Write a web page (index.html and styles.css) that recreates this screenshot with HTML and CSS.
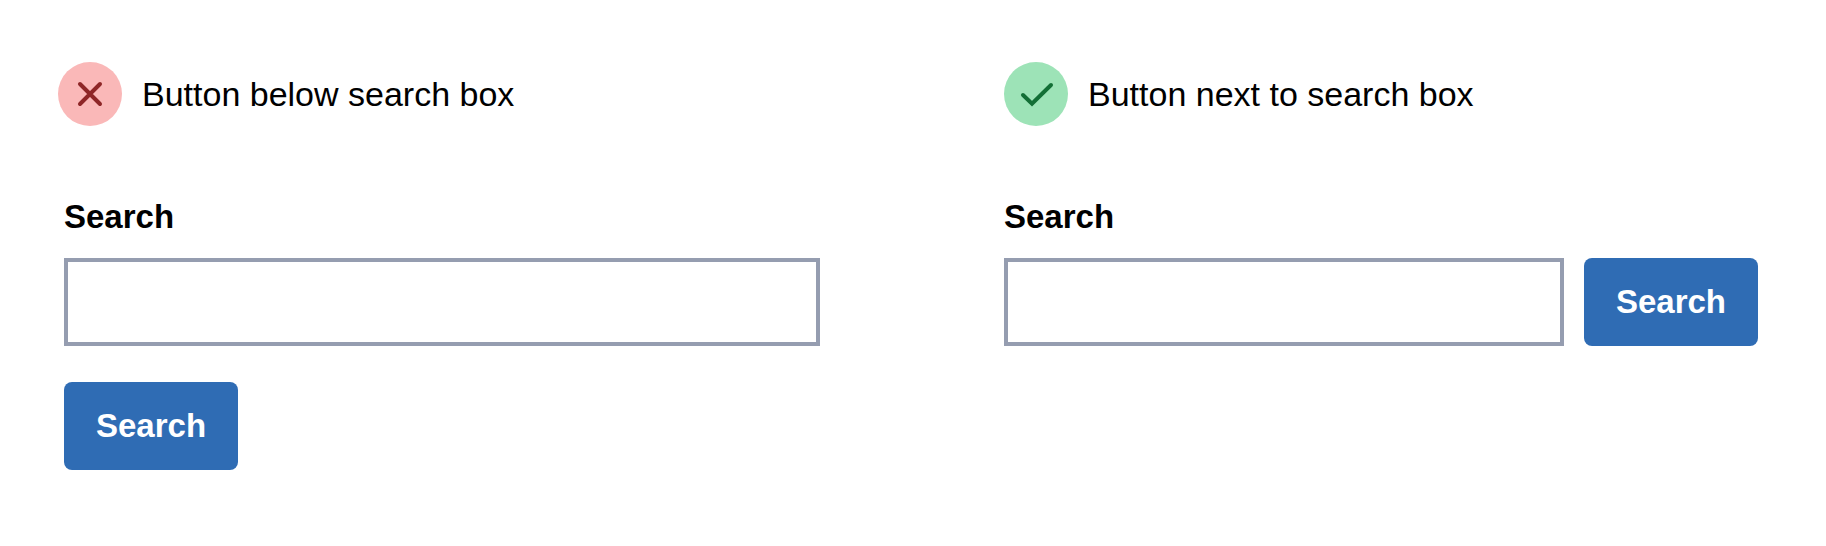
FILE: index.html
```html
<!DOCTYPE html>
<html lang="en">
<head>
  <meta charset="utf-8">
  <meta name="viewport" content="width=device-width, initial-scale=1">
  <title>Search button placement</title>
  <link rel="stylesheet" href="styles.css">
</head>
<body>
  <main class="comparison">
    <section class="example">
      <h2 class="example-title">
        <svg class="badge badge-bad" viewBox="0 0 64 64" aria-hidden="true">
          <circle cx="32" cy="32" r="32"/>
          <path d="M22 22L42 42M42 22L22 42"/>
        </svg>
        Button below search box
      </h2>
      <form class="search search-inset">
        <label class="search-label" for="search-stacked">Search</label>
        <div class="search-controls search-stacked">
          <input class="search-input" id="search-stacked" type="search">
          <button class="search-button" type="button">Search</button>
        </div>
      </form>
    </section>
    <section class="example">
      <h2 class="example-title">
        <svg class="badge badge-good" viewBox="0 0 64 64" aria-hidden="true">
          <circle cx="32" cy="32" r="32"/>
          <path d="M19 33L28 41.6L47 23"/>
        </svg>
        Button next to search box
      </h2>
      <form class="search">
        <label class="search-label" for="search-inline">Search</label>
        <div class="search-controls">
          <input class="search-input" id="search-inline" type="search">
          <button class="search-button" type="button">Search</button>
        </div>
      </form>
    </section>
  </main>
</body>
</html>
```
FILE: styles.css
```css
* {
  box-sizing: border-box;
}

body {
  margin: 0;
  background: #fff;
  color: #000;
  font-family: "Liberation Sans", Arial, sans-serif;
}

.comparison {
  display: grid;
  grid-template-columns: 762fr 754fr;
  gap: 184px;
  padding: 62px 68px 62px 58px;
}

.example {
  min-width: 0;
}

.example-title {
  display: flex;
  align-items: center;
  gap: 20px;
  margin: 0 0 71px;
  font-size: 34px;
  font-weight: 400;
  line-height: 40px;
}

.badge {
  flex: none;
  width: 64px;
  height: 64px;
}

.badge path {
  fill: none;
  stroke-width: 4;
  stroke-linecap: round;
}

.badge-bad circle {
  fill: #fab8b8;
}

.badge-bad path {
  stroke: #8e2627;
}

.badge-good circle {
  fill: #9de3b7;
}

.badge-good path {
  stroke: #136f36;
}

.search-inset {
  margin-left: 6px;
}

.search-label {
  display: block;
  margin-bottom: 21px;
  font-size: 33px;
  font-weight: 700;
  line-height: 40px;
}

.search-controls {
  display: flex;
  gap: 20px;
}

.search-stacked {
  flex-direction: column;
  align-items: flex-start;
  gap: 36px;
}

.search-input {
  flex: 1;
  min-width: 0;
  width: 100%;
  padding: 20px 16px;
  border: 4px solid #959db0;
  border-radius: 0;
  background: #fff;
  font: 400 33px/40px "Liberation Sans", Arial, sans-serif;
  appearance: none;
}

.search-button {
  flex: none;
  padding: 24px 32px;
  border: 0;
  border-radius: 8px;
  background: #2f6cb4;
  color: #fff;
  font: 700 33px/40px "Liberation Sans", Arial, sans-serif;
  cursor: pointer;
}
```
